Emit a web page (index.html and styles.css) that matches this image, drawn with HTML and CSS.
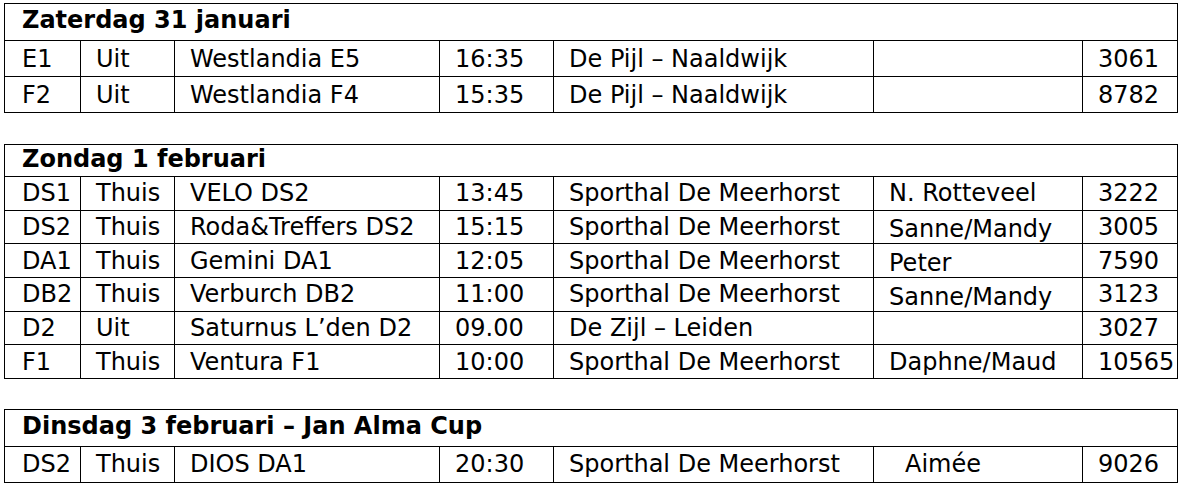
FILE: index.html
```html
<!DOCTYPE html>
<html lang="nl">
<head>
<meta charset="utf-8">
<title>Programma</title>
<link rel="stylesheet" href="styles.css">
</head>
<body>
<table class="sched sched-a">
  <colgroup>
    <col class="c1"><col class="c2"><col class="c3"><col class="c4"><col class="c5"><col class="c6"><col class="c7">
  </colgroup>
  <tr class="head"><th colspan="7">Zaterdag 31 januari</th></tr>
  <tr><td>E1</td><td>Uit</td><td>Westlandia E5</td><td>16:35</td><td>De Pijl – Naaldwijk</td><td></td><td>3061</td></tr>
  <tr><td>F2</td><td>Uit</td><td>Westlandia F4</td><td>15:35</td><td>De Pijl – Naaldwijk</td><td></td><td>8782</td></tr>
</table>

<table class="sched sched-b">
  <colgroup>
    <col class="c1"><col class="c2"><col class="c3"><col class="c4"><col class="c5"><col class="c6"><col class="c7">
  </colgroup>
  <tr class="head"><th colspan="7">Zondag 1 februari</th></tr>
  <tr><td>DS1</td><td>Thuis</td><td>VELO DS2</td><td>13:45</td><td>Sporthal De Meerhorst</td><td>N. Rotteveel</td><td>3222</td></tr>
  <tr><td>DS2</td><td>Thuis</td><td>Roda&amp;Treffers DS2</td><td>15:15</td><td>Sporthal De Meerhorst</td><td class="low">Sanne/Mandy</td><td>3005</td></tr>
  <tr><td>DA1</td><td>Thuis</td><td>Gemini DA1</td><td>12:05</td><td>Sporthal De Meerhorst</td><td class="low">Peter</td><td>7590</td></tr>
  <tr><td>DB2</td><td>Thuis</td><td>Verburch DB2</td><td>11:00</td><td>Sporthal De Meerhorst</td><td class="low">Sanne/Mandy</td><td>3123</td></tr>
  <tr><td>D2</td><td>Uit</td><td>Saturnus L’den D2</td><td>09.00</td><td>De Zijl – Leiden</td><td></td><td>3027</td></tr>
  <tr><td>F1</td><td>Thuis</td><td>Ventura F1</td><td>10:00</td><td>Sporthal De Meerhorst</td><td>Daphne/Maud</td><td>10565</td></tr>
</table>

<table class="sched sched-c">
  <colgroup>
    <col class="c1"><col class="c2"><col class="c3"><col class="c4"><col class="c5"><col class="c6"><col class="c7">
  </colgroup>
  <tr class="head"><th colspan="7">Dinsdag 3 februari – Jan Alma Cup</th></tr>
  <tr><td>DS2</td><td>Thuis</td><td>DIOS DA1</td><td>20:30</td><td>Sporthal De Meerhorst</td><td class="indent">Aimée</td><td>9026</td></tr>
</table>
</body>
</html>
```

FILE: styles.css
```css
html, body {
  margin: 0;
  padding: 0;
  background: #fff;
}

body {
  padding: 3px 0 0 4px;
  font-family: "DejaVu Sans", Verdana, sans-serif;
  font-size: 24px;
  color: #000;
}

.sched {
  border-collapse: collapse;
  table-layout: fixed;
  width: 1173px;
}

.sched-b {
  margin-top: 31px;
}

.sched-c {
  margin-top: 30px;
}

.c1 { width: 76px; }
.c2 { width: 94px; }
.c3 { width: 265px; }
.c4 { width: 114px; }
.c5 { width: 320px; }
.c6 { width: 209px; }
.c7 { width: 95px; }

.sched th,
.sched td {
  border: 1px solid #000;
  padding: 0 0 0 15px;
  text-align: left;
  white-space: nowrap;
  overflow: hidden;
  line-height: 1;
  vertical-align: middle;
}

.sched th {
  font-weight: bold;
  padding-left: 17px;
  padding-bottom: 4px;
}

.sched td:first-child {
  padding-left: 17px;
}

.sched-a tr, .sched-c tr { height: 36px; }
.sched-a .head, .sched-c .head { height: 37px; }
.sched-b tr { height: 33.67px; }
.sched-b .head { height: 32px; }

.sched td.low {
  padding-top: 5px;
}

.sched td.indent {
  padding-left: 31px;
}
```
